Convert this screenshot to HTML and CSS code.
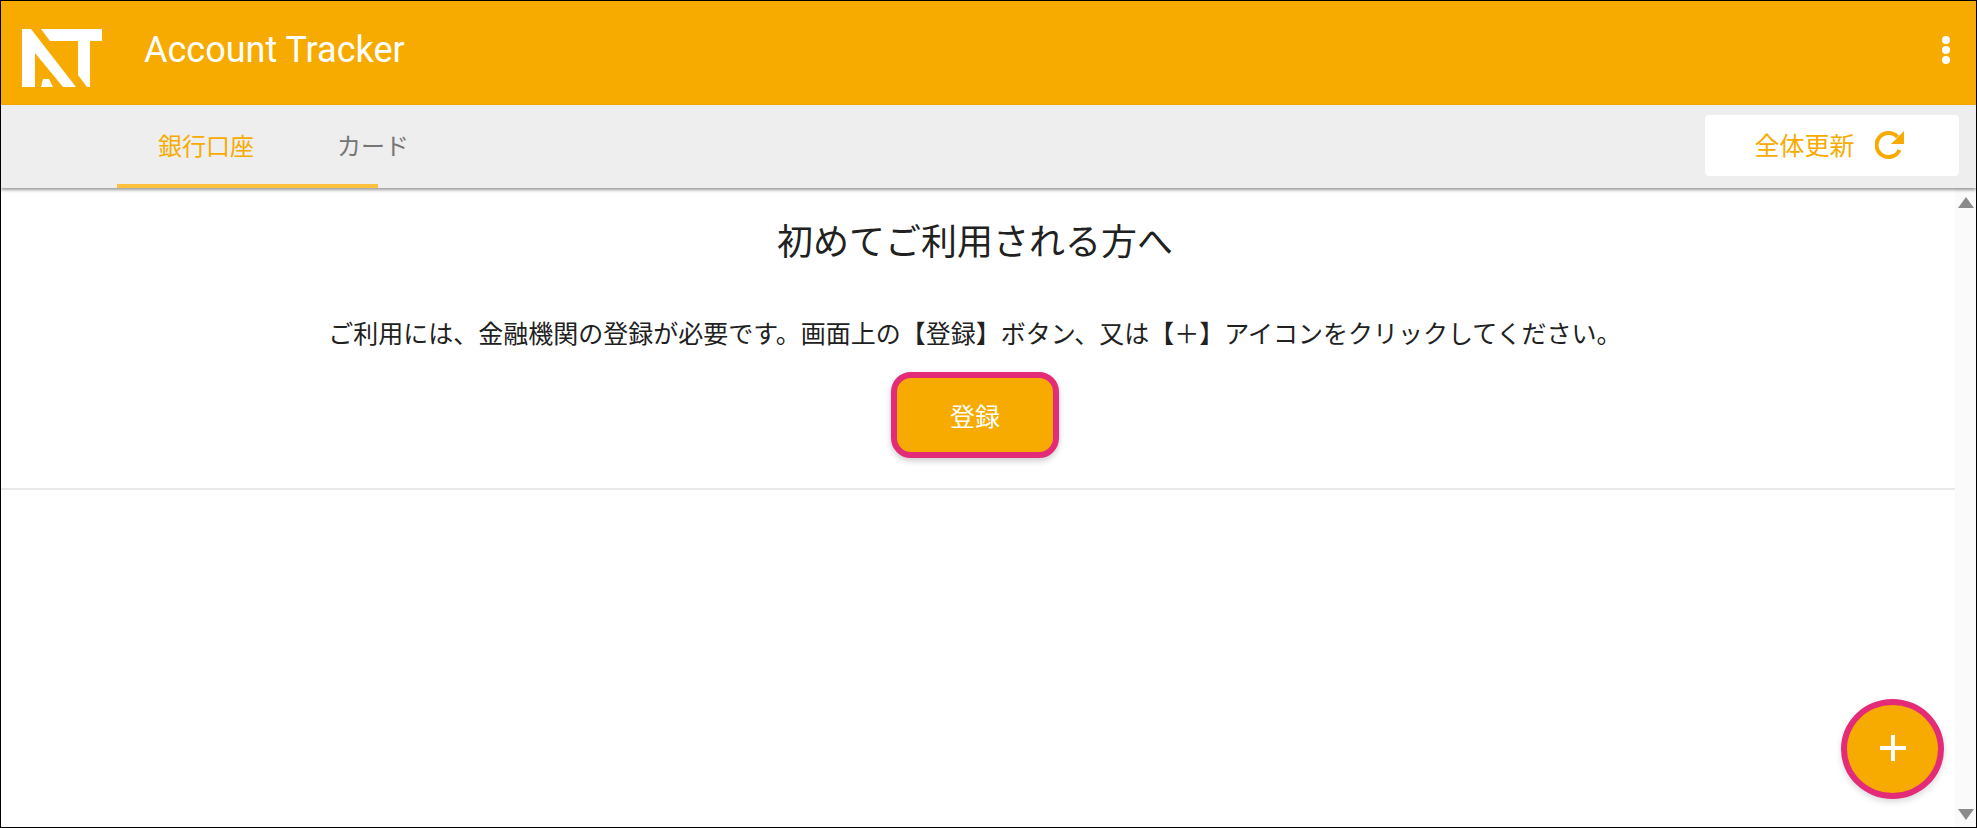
FILE: index.html
```html
<!DOCTYPE html>
<html>
<head>
    <title>Account Tracker</title>
    <link rel="stylesheet" href="styles.css">
</head>
<body>
    <div class="app">
        <div class="header">
            <svg class="logo" width="82" height="60" viewBox="22 29 82 60">
                <path d="M22 29H31L76 87H63L35 53V87H22Z"/>
                <path d="M43 79H49L53 87H41Z"/>
                <path d="M41 29H102V41H90V87H87L78 75V41H50Z"/>
            </svg>
            <h1 class="title">Account Tracker</h1>
            <div class="menu-dots">
                <span class="menu-dot"></span>
                <span class="menu-dot"></span>
                <span class="menu-dot"></span>
            </div>
        </div>

        <div class="tab-bar">
            <div class="tab active">銀行口座</div>
            <div class="tab">カード</div>
            <div class="tab-ink"></div>
            <button class="refresh-button">
                全体更新
                <svg width="30" height="29" viewBox="0 0 30 29">
                    <path d="M24.500 20A12 12 0 1 1 22.500 7" fill="none" stroke="#f7ab00" stroke-width="4"/>
                    <path d="M29 1V14H16Z" fill="#f7ab00"/>
                </svg>
            </button>
        </div>

        <div class="main">
            <div class="content">
                <div class="intro">
                    <h2 class="intro-title">初めてご利用される方へ</h2>
                    <p class="intro-text">ご利用には、金融機関の登録が必要です。画面上の【登録】ボタン、又は【&#xFF0B;】アイコンをクリックしてください。</p>
                    <button class="register-button">登録</button>
                </div>
            </div>
            <div class="scrollbar">
                <span class="arrow-up"></span>
                <span class="arrow-down"></span>
            </div>
            <button class="fab">
                <svg width="26" height="26" viewBox="0 0 26 26">
                    <path d="M11 0H15V11H26V15H15V26H11V15H0V11H11Z" fill="#ffffff"/>
                </svg>
            </button>
        </div>
    </div>
</body>
</html>
```

FILE: styles.css
```css
* {
    margin: 0;
    padding: 0;
    box-sizing: border-box;
    font-family: Roboto, "Noto Sans CJK JP", sans-serif;
}

body {
    background-color: #ffffff;
}

.app {
    height: 828px;
    border: 1px solid #000000;
    display: flex;
    flex-direction: column;
}

.header {
    height: 104px;
    flex-shrink: 0;
    background-color: #f7ab00;
    display: flex;
    align-items: center;
    padding: 0 26px 0 21px;
    color: #ffffff;
}

.logo {
    fill: #ffffff;
    margin-right: 40px;
    margin-top: 12px;
}

.title {
    font-size: 36px;
    font-weight: 400;
    flex: 1;
    margin-top: -6px;
}

.menu-dots {
    display: flex;
    flex-direction: column;
    gap: 2px;
    margin-top: -6px;
}

.menu-dot {
    width: 8px;
    height: 8px;
    border-radius: 50%;
    background-color: #ffffff;
}

.tab-bar {
    position: relative;
    height: 83px;
    flex-shrink: 0;
    background-color: #eeeeee;
    display: flex;
    align-items: center;
    padding: 0 17px 5px 157px;
    gap: 83px;
    box-shadow: 0 2px 3px rgba(0,0,0,0.4);
    z-index: 1;
}

.tab {
    font-size: 24px;
    color: #757575;
}

.tab.active {
    color: #f7ab00;
}

.tab-ink {
    position: absolute;
    left: 116px;
    bottom: 0;
    width: 261px;
    height: 4px;
    background-color: #fdc13f;
}

.refresh-button {
    margin-left: auto;
    margin-top: 3px;
    width: 254px;
    height: 61px;
    border: none;
    border-radius: 4px;
    background-color: #ffffff;
    color: #f7ab00;
    font-size: 25px;
    display: flex;
    align-items: center;
    justify-content: center;
    gap: 20px;
    padding: 0 5px 3px 0;
}

.main {
    position: relative;
    flex: 1;
    display: flex;
}

.content {
    flex: 1;
}

.intro {
    height: 302px;
    border-bottom: 2px solid #e8e8e8;
    display: flex;
    flex-direction: column;
    align-items: center;
    padding: 28px 6px 0 0;
}

.intro-title {
    font-size: 36px;
    font-weight: 400;
    line-height: 54px;
    color: #212121;
    margin-bottom: 47px;
}

.intro-text {
    font-size: 25px;
    line-height: 36px;
    color: #212121;
    margin-bottom: 19px;
}

.register-button {
    width: 168px;
    height: 86px;
    border: 6px solid #e32b78;
    border-radius: 20px;
    background-color: #f7ab00;
    color: #ffffff;
    font-size: 25px;
    box-shadow: 0 3px 6px rgba(0,0,0,0.2);
}

.scrollbar {
    width: 21px;
    background-color: #fafafa;
    display: flex;
    flex-direction: column;
    justify-content: space-between;
    align-items: center;
    padding: 9px 0 7px;
}

.arrow-up,
.arrow-down {
    width: 0;
    height: 0;
    border-left: 8px solid transparent;
    border-right: 8px solid transparent;
}

.arrow-up {
    border-bottom: 11px solid #8a8a8a;
}

.arrow-down {
    border-top: 11px solid #8a8a8a;
}

.fab {
    position: absolute;
    right: 32px;
    bottom: 28px;
    width: 103px;
    height: 100px;
    border: 6px solid #e32b78;
    border-radius: 50%;
    background-color: #f7ab00;
    display: flex;
    align-items: center;
    justify-content: center;
    box-shadow: 0 3px 6px rgba(0,0,0,0.15);
}

.fab svg {
    margin-bottom: 2px;
}
```
